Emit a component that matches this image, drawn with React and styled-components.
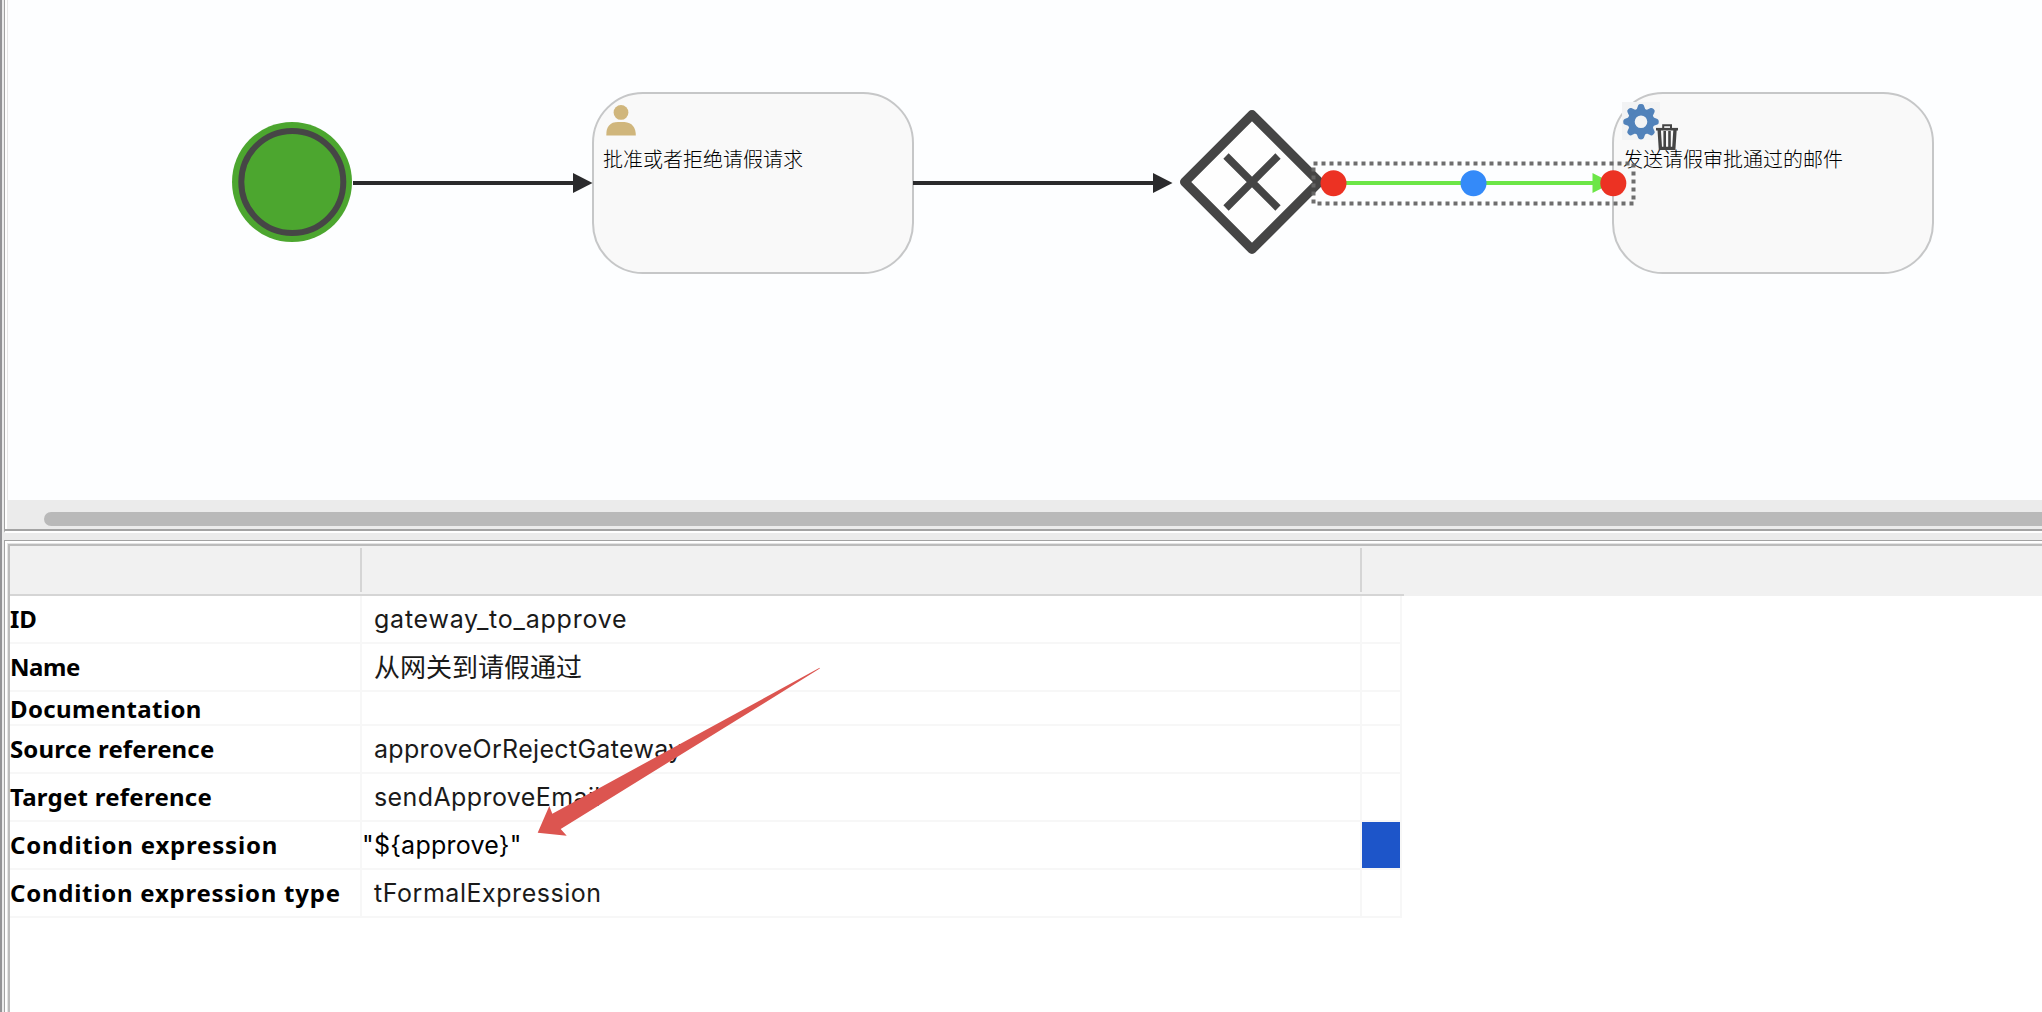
import React from "react";
import styled, { createGlobalStyle } from "styled-components";

const GlobalStyle = createGlobalStyle`
  * { box-sizing: border-box; }
  body { margin: 0; background: #ebebeb; }
`;

const Window = styled.div`
  display: flex;
  width: 2042px;
  height: 1012px;
  border-left: 2px solid #939396;
  background: #ebebeb;
  padding-left: 2px;
  overflow: hidden;
`;

const Main = styled.main`
  flex: 1;
  min-width: 0;
  display: flex;
  flex-direction: column;
  gap: 7px;
`;

const EditorPane = styled.section`
  height: 533px;
  flex: none;
  display: flex;
  flex-direction: column;
  padding-left: 2px;
  background: #fff;
  border-left: 1px solid #a3a3a3;
  border-bottom: 2px solid #fff;
  box-shadow: inset 0 -2px 0 #a3a3a3;
`;

const Canvas = styled.div`
  position: relative;
  height: 500px;
  background: #fdfeff;
  border-left: 1px solid #e6e6e6;
  overflow: hidden;
`;

const ScrollTrack = styled.div`
  height: 29px;
  padding: 12px 0 3px 37px;
  background: #ebebeb;
`;

const ScrollThumb = styled.div`
  height: 14px;
  border-radius: 7px 0 0 7px;
  background: #b9b9b9;
`;

const PropertiesPane = styled.section`
  position: relative;
  flex: 1;
  min-height: 0;
  padding: 2px 0 0 2px;
  background: #fff;
  border-left: 1px solid #a3a3a3;
  border-top: 1px solid #a3a3a3;
`;

const TableFrame = styled.div`
  height: 100%;
  border-left: 1px solid #e4e4e4;
  border-top: 1px solid #e4e4e4;
`;

const Table = styled.div`
  height: 100%;
  border-left: 2px solid #bcbcbc;
  border-top: 2px solid #bcbcbc;
`;

const Header = styled.div`
  display: flex;
  height: 50px;
  background: #f1f1f1;
`;

const HeaderCell = styled.div`
  width: ${(p) => p.$width}px;
  padding: 2px 0;
  border-bottom: 2px solid #d5d5d5;
  display: flex;
  justify-content: flex-end;

  &::after {
    content: "";
    display: ${(p) => (p.$last ? "none" : "block")};
    width: 2px;
    height: 44px;
    background: #d5d5d5;
  }
`;

const Row = styled.div`
  display: flex;
  width: 1392px;
  height: ${(p) => (p.$compact ? 34 : 48)}px;
  border-bottom: 2px solid #f7f7f7;
`;

const Cell = styled.div`
  display: flex;
  align-items: center;
  white-space: pre;
  border-right: 2px solid #f7f7f7;
`;

const NameCell = styled(Cell)`
  width: 352px;
  padding-top: ${(p) => (p.$compact ? 2 : 0)}px;
  font: 700 24px/30px "Noto Sans", sans-serif;
  letter-spacing: ${(p) => p.$tracking || 0}px;
  color: #000;
`;

const ValueCell = styled(Cell)`
  width: 1000px;
  padding-left: ${(p) => (p.$editing ? 0 : 12)}px;
  font: 400 25px/32px Inter, "Noto Sans CJK SC", sans-serif;
  letter-spacing: ${(p) => p.$tracking || 0}px;
  color: ${(p) => (p.$editing ? "#000" : "#1a1a1a")};
`;

const CjkText = styled.span`
  padding-bottom: 2px;
  font: 400 26px/32px "Noto Sans CJK SC", sans-serif;
`;

const ActionCell = styled(Cell)`
  width: 40px;
`;

const ActionFill = styled.div`
  width: 100%;
  height: 100%;
  background: #1d55c9;
`;

const Drawing = styled.svg`
  position: absolute;
  left: ${(p) => p.$x - 8}px;
  top: ${(p) => p.$y}px;
  overflow: visible;
`;

const Task = styled.div`
  position: absolute;
  left: ${(p) => p.$x - 8}px;
  top: 92px;
  width: 322px;
  height: 182px;
  border: 2px solid #c6c7c8;
  border-radius: 51px;
  background: #f9f9f9;
`;

const TaskLabel = styled.div`
  position: absolute;
  left: ${(p) => p.$x - 8}px;
  top: 144px;
  font: 300 20px/30px "Noto Sans CJK SC", sans-serif;
  white-space: nowrap;
  color: #000;
`;

const Pointer = styled.svg`
  position: absolute;
  left: 532px;
  top: 125px;
  overflow: visible;
`;

const rows = [
  { name: "ID", value: "gateway_to_approve", valueTracking: 0.76 },
  { name: "Name", nameTracking: -0.4, value: "从网关到请假通过", cjk: true },
  { name: "Documentation", nameTracking: 0.38, value: "", compact: true },
  { name: "Source reference", nameTracking: 0.14, value: "approveOrRejectGateway", valueTracking: 0.32 },
  { name: "Target reference", nameTracking: 0.25, value: "sendApproveEmail", valueTracking: 0.4 },
  { name: "Condition expression", nameTracking: 0.8, value: "\"${approve}\"", valueTracking: 0.25, editing: true },
  { name: "Condition expression type", nameTracking: 0.75, value: "tFormalExpression", valueTracking: 0.54 },
];

function Flow({ from, to, color = "#2a2a2c" }) {
  return (
    <g fill={color}>
      <rect x={from} y="181" width={to - 19 - from} height="4" />
      <path d={`M${to - 19.5} 173 L${to} 183 L${to - 19.5} 193 Z`} />
    </g>
  );
}

function StartEvent() {
  return (
    <Drawing $x={232} $y={122} width="120" height="120">
      <circle cx="60" cy="60" r="60" fill="#4ca62f" />
      <circle cx="60.3" cy="60" r="51" fill="none" stroke="#464646" strokeWidth="6" />
    </Drawing>
  );
}

function Gateway() {
  return (
    <Drawing $x={1180} $y={110} width="144" height="144">
      <path d="M72 4.7 L139.3 72 L72 139.3 L4.7 72 Z" fill="#fefefe" stroke="#454545" strokeWidth="9.4" strokeLinejoin="round" />
      <path d="M46 46 L98 98 M98 46 L46 98" stroke="#454545" strokeWidth="7.5" />
    </Drawing>
  );
}

function UserIcon() {
  return (
    <Drawing $x={606} $y={104} width="30" height="32">
      <g fill="#d0b67c">
        <circle cx="15" cy="8.4" r="7.4" />
        <path d="M0.3 31.5 Q0 18 12 18 H18.5 Q29.8 19 29.8 31.5 Z" />
      </g>
    </Drawing>
  );
}

function GearIcon() {
  const teeth = [0, 45, 90, 135, 180, 225, 270, 315];
  return (
    <Drawing $x={1622} $y={102} width="38" height="38">
      <rect width="38" height="38" fill="#f2f3f4" />
      <g fill="#5182ba" transform="translate(19 19.7)">
        <circle r="9.8" fill="none" stroke="#5182ba" strokeWidth="7" />
        {teeth.map((a) => (
          <path key={a} transform={`rotate(${a})`} d="M-4.6 -11.5 L-2.8 -16.4 Q-2.4 -17.8 0 -17.8 Q2.4 -17.8 2.8 -16.4 L4.6 -11.5 Z" />
        ))}
      </g>
    </Drawing>
  );
}

function TrashIcon() {
  return (
    <Drawing $x={1656} $y={124} width="22" height="26">
      <g fill="none" stroke="#454545">
        <path d="M7.2 4.5 V1.2 H15 V4.5" strokeWidth="2" />
        <path d="M0 5.2 H22" strokeWidth="2.6" />
        <path d="M3.2 6 L4.4 24.4 H17.8 L19 6" strokeWidth="3.4" />
        <path d="M8.7 7 V23 M13.5 7 V23" strokeWidth="2.6" />
      </g>
    </Drawing>
  );
}

function Diagram() {
  return (
    <Canvas>
      <StartEvent />
      <Task $x={592} />
      <UserIcon />
      <TaskLabel $x={603}>批准或者拒绝请假请求</TaskLabel>
      <Gateway />
      <Task $x={1612} />
      <GearIcon />
      <TaskLabel $x={1623}>发送请假审批通过的邮件</TaskLabel>
      <TrashIcon />
      <Drawing $x={0} $y={0} width="2042" height="500">
        <Flow from={353} to={592.5} />
        <Flow from={913} to={1172.5} />
        <Flow from={1334} to={1612} color="#6ce647" />
        <rect x="1313.5" y="163.5" width="320" height="40" fill="none" stroke="#666" strokeOpacity="0.95" strokeWidth="4" strokeDasharray="4 4" />
        <circle cx="1333.5" cy="183.3" r="13" fill="#ec3223" />
        <circle cx="1473.5" cy="183.3" r="13" fill="#348af9" />
        <circle cx="1613.3" cy="183.3" r="13" fill="#ec3223" />
      </Drawing>
    </Canvas>
  );
}

function PropertyTable() {
  return (
    <TableFrame>
      <Table>
        <Header>
          <HeaderCell $width={352} />
          <HeaderCell $width={1000} />
          <HeaderCell $width={42} $last />
        </Header>
        {rows.map((r) => (
          <Row key={r.name} $compact={r.compact}>
            <NameCell $compact={r.compact} $tracking={r.nameTracking}>{r.name}</NameCell>
            <ValueCell $editing={r.editing} $tracking={r.valueTracking}>
              {r.cjk ? <CjkText>{r.value}</CjkText> : r.value}
            </ValueCell>
            <ActionCell>{r.editing && <ActionFill />}</ActionCell>
          </Row>
        ))}
      </Table>
    </TableFrame>
  );
}

export default function App() {
  return (
    <>
      <GlobalStyle />
      <Window>
        <Main>
          <EditorPane>
            <Diagram />
            <ScrollTrack>
              <ScrollThumb />
            </ScrollTrack>
          </EditorPane>
          <PropertiesPane>
            <PropertyTable />
            <Pointer width="290" height="175">
              <path d="M282.6 1.8 L282.8 2.6 L23.7 163 L29.7 169.7 L0.7 166.7 L12.3 140 L15.3 147.7 Z" fill="#dc5550" />
            </Pointer>
          </PropertiesPane>
        </Main>
      </Window>
    </>
  );
}
